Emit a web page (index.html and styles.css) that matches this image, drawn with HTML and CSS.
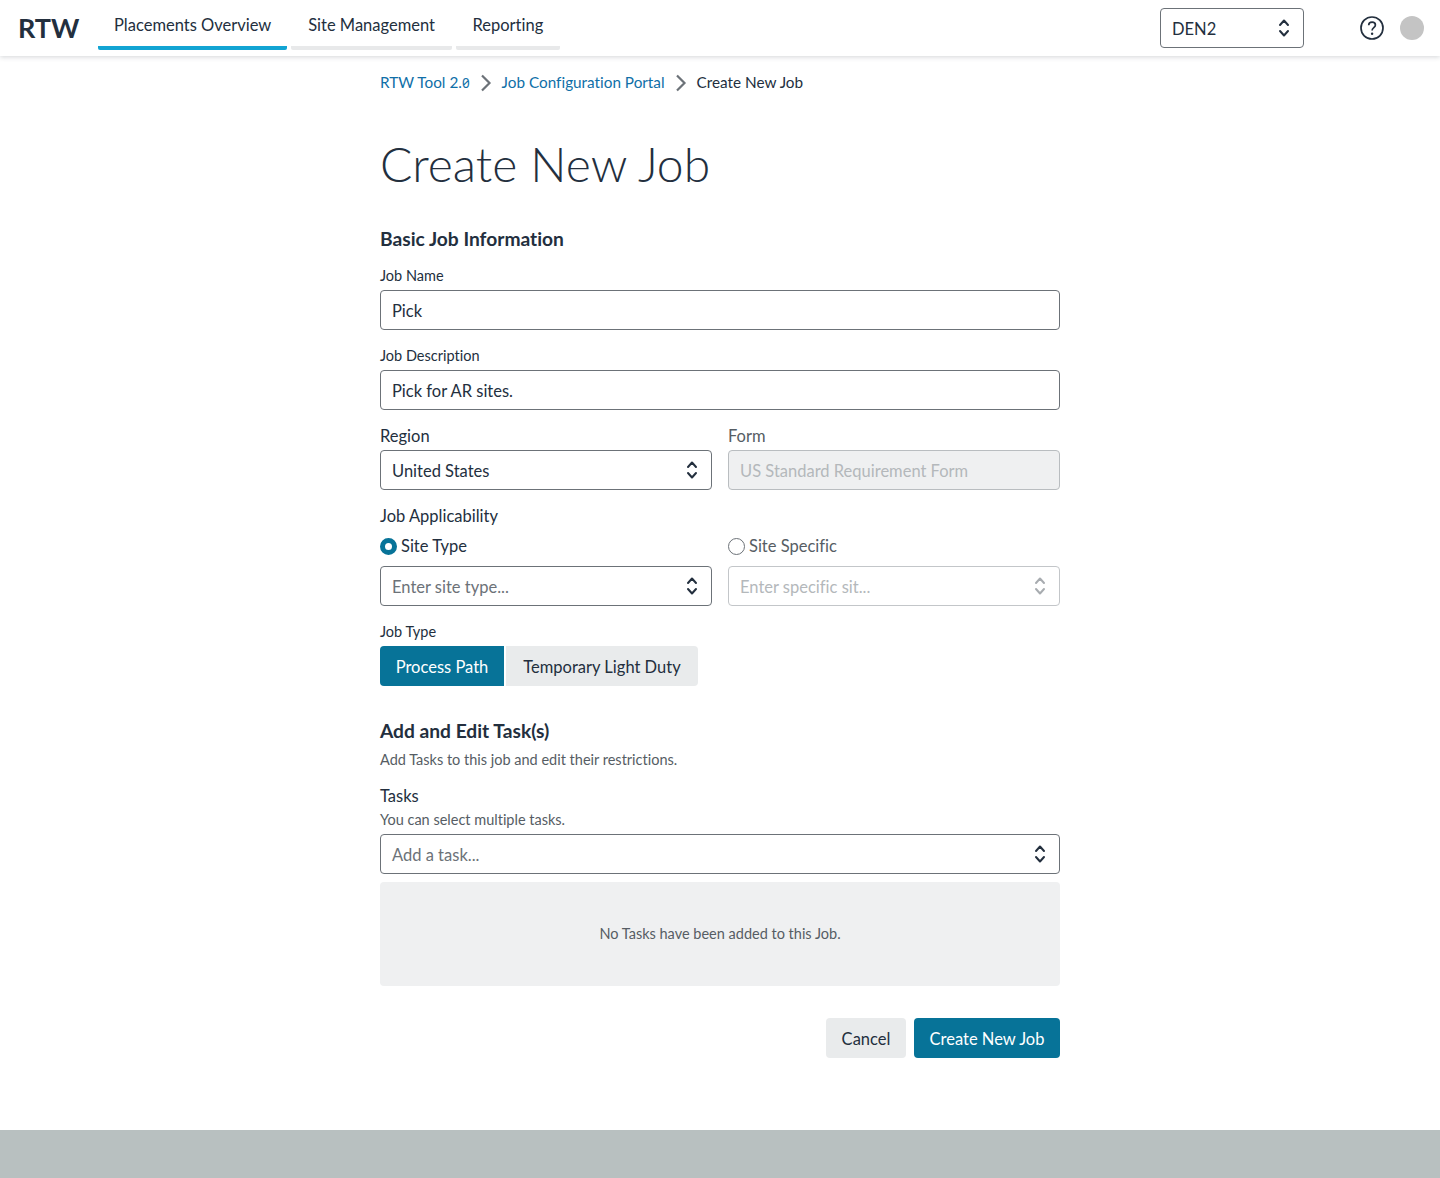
FILE: index.html
```html
<!DOCTYPE html>
<html lang="en">
<head>
<meta charset="utf-8">
<title>Create New Job</title>
<link rel="stylesheet" href="styles.css">
</head>
<body>
<svg class="sprites" width="0" height="0" aria-hidden="true">
  <symbol id="updown" viewBox="0 0 12 20"><path d="M2 7l4-4.500L10 7M2 13l4 4.500 4-4.500" fill="none" stroke="currentColor" stroke-width="2" stroke-linecap="round" stroke-linejoin="round"/></symbol>
  <symbol id="crumb" viewBox="0 0 12 18"><path d="M2 1.500L9.500 9 2 16.500" fill="none" stroke="currentColor" stroke-width="2.200"/></symbol>
</svg>
<header class="topbar">
  <div class="logo">RTW</div>
  <nav class="tabs">
    <a class="tab tab-active">Placements Overview</a>
    <a class="tab tab-site">Site Management</a>
    <a class="tab tab-reporting">Reporting</a>
  </nav>
  <div class="top-right">
    <div class="control site-picker"><span>DEN2</span><svg class="updown"><use href="#updown"/></svg></div>
    <svg class="help" viewBox="0 0 24 24" width="24" height="24"><circle cx="12" cy="12" r="11" fill="none" stroke="#232f3e" stroke-width="1.700"/><path d="M8.700 9.300c0-2 1.500-3.200 3.400-3.200 1.900 0 3.300 1.200 3.300 2.900 0 2.600-3.300 2.700-3.300 5.400" fill="none" stroke="#232f3e" stroke-width="1.700"/><circle cx="12.100" cy="17.700" r="1.200" fill="#232f3e"/></svg>
    <div class="avatar"></div>
  </div>
</header>
<main class="page">
  <nav class="breadcrumbs">
    <a>RTW Tool 2.<span class="slashed">0</span></a><svg class="crumb-sep"><use href="#crumb"/></svg>
    <a>Job Configuration Portal</a><svg class="crumb-sep"><use href="#crumb"/></svg>
    <span>Create New Job</span>
  </nav>
  <h1>Create New Job</h1>
  <h2>Basic Job Information</h2>
  <div class="field first">
    <label class="label-sm">Job Name</label>
    <div class="control">Pick</div>
  </div>
  <div class="field">
    <label class="label-sm">Job Description</label>
    <div class="control">Pick for AR sites.</div>
  </div>
  <div class="columns">
    <div class="field">
      <label class="label-md">Region</label>
      <div class="control"><span>United States</span><svg class="updown"><use href="#updown"/></svg></div>
    </div>
    <div class="field">
      <label class="label-md muted">Form</label>
      <div class="control control-readonly">US Standard Requirement Form</div>
    </div>
  </div>
  <div class="applicability">
    <div class="label-md">Job Applicability</div>
    <div class="columns radios">
      <div>
        <div class="radio-row"><span class="radio radio-on"></span>Site Type</div>
        <div class="control placeholder"><span>Enter site type...</span><svg class="updown"><use href="#updown"/></svg></div>
      </div>
      <div>
        <div class="radio-row muted"><span class="radio"></span>Site Specific</div>
        <div class="control control-disabled"><span>Enter specific sit...</span><svg class="updown"><use href="#updown"/></svg></div>
      </div>
    </div>
  </div>
  <div class="field">
    <label class="label-sm">Job Type</label>
    <div class="segmented">
      <button class="btn btn-primary seg-left">Process Path</button>
      <button class="btn btn-secondary seg-right">Temporary Light Duty</button>
    </div>
  </div>
  <h2 class="tasks-heading">Add and Edit Task(s)</h2>
  <p class="hint hint-section">Add Tasks to this job and edit their restrictions.</p>
  <div class="label-md tasks-label">Tasks</div>
  <p class="hint hint-tasks">You can select multiple tasks.</p>
  <div class="control placeholder"><span>Add a task...</span><svg class="updown"><use href="#updown"/></svg></div>
  <div class="empty">No Tasks have been added to this Job.</div>
  <div class="actions">
    <button class="btn btn-secondary btn-cancel">Cancel</button>
    <button class="btn btn-primary btn-create">Create New Job</button>
  </div>
</main>
<footer class="footer"></footer>
</body>
</html>
```
FILE: styles.css
```css
* { box-sizing: border-box; }
html, body { margin: 0; padding: 0; }
body {
  height: 1178px;
  display: flex;
  flex-direction: column;
  background: #fff;
  color: #232f3e;
  font-family: "Lato", "Noto Sans", sans-serif;
  font-size: 16.5px;
  line-height: 20px;
  font-variant-ligatures: none;
  overflow: hidden;
}
.sprites { position: absolute; }

.topbar {
  height: 56px;
  flex: none;
  display: flex;
  align-items: stretch;
  background: #fff;
  box-shadow: 0 1px 5px rgba(35, 47, 62, 0.2);
  padding-left: 18px;
}
.logo {
  width: 80px;
  font-size: 27px;
  font-weight: 700;
  line-height: 56px;
}
.tabs { display: flex; gap: 4px; height: 50px; }
.tab {
  padding: 15px 16px 0;
  border-bottom: 4px solid #e8e9ea;
  border-radius: 0 0 2px 2px;
  color: #232f3e;
  text-align: center;
}
.tab-active { border-bottom-color: #12a4d3; }
.tab-site { width: 160.6px; }
.tab-reporting { width: 104px; }
.top-right {
  margin-left: auto;
  display: flex;
  align-items: center;
  padding: 0 16px 0 0;
  height: 56px;
}
.site-picker { width: 144px; margin-right: 56px; }
.help { margin-right: 16px; }
.avatar { width: 24px; height: 24px; border-radius: 50%; background: #c4c4c4; }

.page { width: 680px; margin: 0 auto; flex: 1; }
.breadcrumbs {
  display: flex;
  align-items: center;
  height: 20px;
  margin-top: 16px;
  font-size: 15.3px;
  color: #232f3e;
}
.breadcrumbs a { color: #0f6fa8; }
.slashed { font-family: "Noto Sans", sans-serif; font-size: 13.5px; font-feature-settings: "zero"; }
.crumb-sep { width: 12px; height: 18px; margin: 0 10px; color: #6c7278; position: relative; top: 1px; }
h1 {
  margin: 40px 0 0;
  font-size: 48px;
  line-height: 64px;
  font-weight: 300;
  color: #232f3e;
}
h2 {
  margin: 31px 0 0;
  font-size: 19.2px;
  line-height: 24px;
  font-weight: 700;
}
.field { margin-top: 16px; display: block; }
.field.first { margin-top: 15px; }
.label-sm, .label-md { display: block; margin-bottom: 4px; }
.label-sm { font-size: 14.5px; }
.label-md { font-size: 16.5px; }
.muted { color: #565d64; }

.control {
  height: 40px;
  display: flex;
  align-items: center;
  justify-content: space-between;
  padding: 1px 12px 0 11px;
  border: 1px solid #6c7278;
  border-radius: 4px;
  background: #fff;
  font-size: 16.5px;
  color: #232f3e;
}
.updown { width: 12px; height: 20px; flex: none; margin: -1px 1px 0 0; }
.placeholder { color: #6c7278; }
.placeholder .updown { color: #232f3e; }
.control-readonly {
  background: #eff0f1;
  border-color: #b9bdc0;
  color: #b4b8bb;
}
.control-disabled { border-color: #c3c6c9; color: #b4b8bb; }
.control-disabled .updown { color: #a8acb0; }

.columns { display: grid; grid-template-columns: 1fr 1fr; gap: 16px; }
.applicability { margin-top: 16px; }
.applicability .label-md { margin-bottom: 0; }
.radios { margin-top: 10px; }
.radio-row { display: flex; align-items: center; gap: 4px; height: 20px; margin-bottom: 10px; }
.radio {
  width: 17px;
  height: 17px;
  border-radius: 50%;
  border: 1px solid #6c7278;
  background: #fff;
}
.radio-on { border: 5px solid #077398; }

.segmented { display: flex; gap: 2px; }
.btn {
  height: 40px;
  padding: 1px 16px 0;
  border: 0;
  border-radius: 4px;
  font: inherit;
  font-size: 16.5px;
}
.btn-primary { background: #077398; color: #fff; }
.btn-secondary { background: #e9ebec; color: #232f3e; }
.seg-left { width: 124px; padding-left: 0; padding-right: 0; border-radius: 4px 0 0 4px; }
.seg-right { width: 192px; padding-left: 0; padding-right: 0; border-radius: 0 4px 4px 0; }
.btn-cancel { width: 80px; padding-left: 0; padding-right: 0; }
.btn-create { width: 146px; padding-left: 0; padding-right: 0; }

.tasks-heading { margin-top: 33px; }
.hint { margin: 0; font-size: 14.5px; color: #565d64; }
.hint-section { margin-top: 7px; }
.tasks-label { margin: 16px 0 4px; }
.hint-tasks { margin-bottom: 4px; }
.empty {
  height: 104px;
  margin-top: 8px;
  display: flex;
  align-items: center;
  justify-content: center;
  background: #eff0f1;
  border-radius: 4px;
  font-size: 14.5px;
  color: #565d64;
}
.actions { display: flex; justify-content: flex-end; gap: 8px; margin-top: 32px; }
.footer { height: 48px; flex: none; background: #b8c0c0; }
```
